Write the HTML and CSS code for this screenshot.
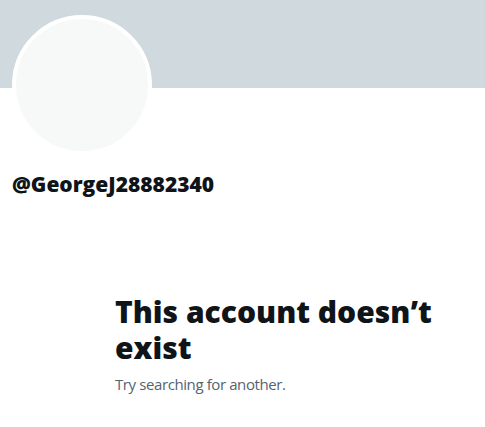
FILE: index.html
```html
<!DOCTYPE html>
<html lang="en">

<head>
    <meta charset="UTF-8">
    <meta name="viewport" content="width=device-width, initial-scale=1.0">
    <title>@GeorgeJ28882340</title>
    <link rel="stylesheet" href="styles.css">
</head>

<body>
    <div class="profile">
        <div class="banner"></div>
        <div class="profile-head">
            <div class="avatar"></div>
            <div class="handle">@GeorgeJ28882340</div>
        </div>

        <div class="empty-state">
            <h2>This account doesn’t exist</h2>
            <p>Try searching for another.</p>
        </div>
    </div>
</body>

</html>
```

FILE: styles.css
```css
body {
    font-family: "Open Sans", "Liberation Sans", Arial, sans-serif;
    background-color: #fff;
    color: #0f1419;
    margin: 0;
    padding: 0;
}

.banner {
    height: 88px;
    background-color: #cfd9de;
}

.profile-head {
    padding: 0 12px;
}

.avatar {
    width: 132px;
    height: 132px;
    margin-top: -73px;
    border: 4px solid #fff;
    border-radius: 50%;
    background-color: #f7f9f9;
}

.handle {
    margin-top: 17px;
    font-size: 21px;
    line-height: 24px;
    font-weight: 800;
}

.empty-state {
    padding: 0 40px 0 115px;
    margin-top: 98px;
}

.empty-state h2 {
    margin: 0;
    font-size: 30px;
    line-height: 36px;
    font-weight: 800;
}

.empty-state p {
    margin: 8px 0 0;
    font-size: 15px;
    line-height: 20px;
    letter-spacing: -0.4px;
    color: #536471;
}
```
